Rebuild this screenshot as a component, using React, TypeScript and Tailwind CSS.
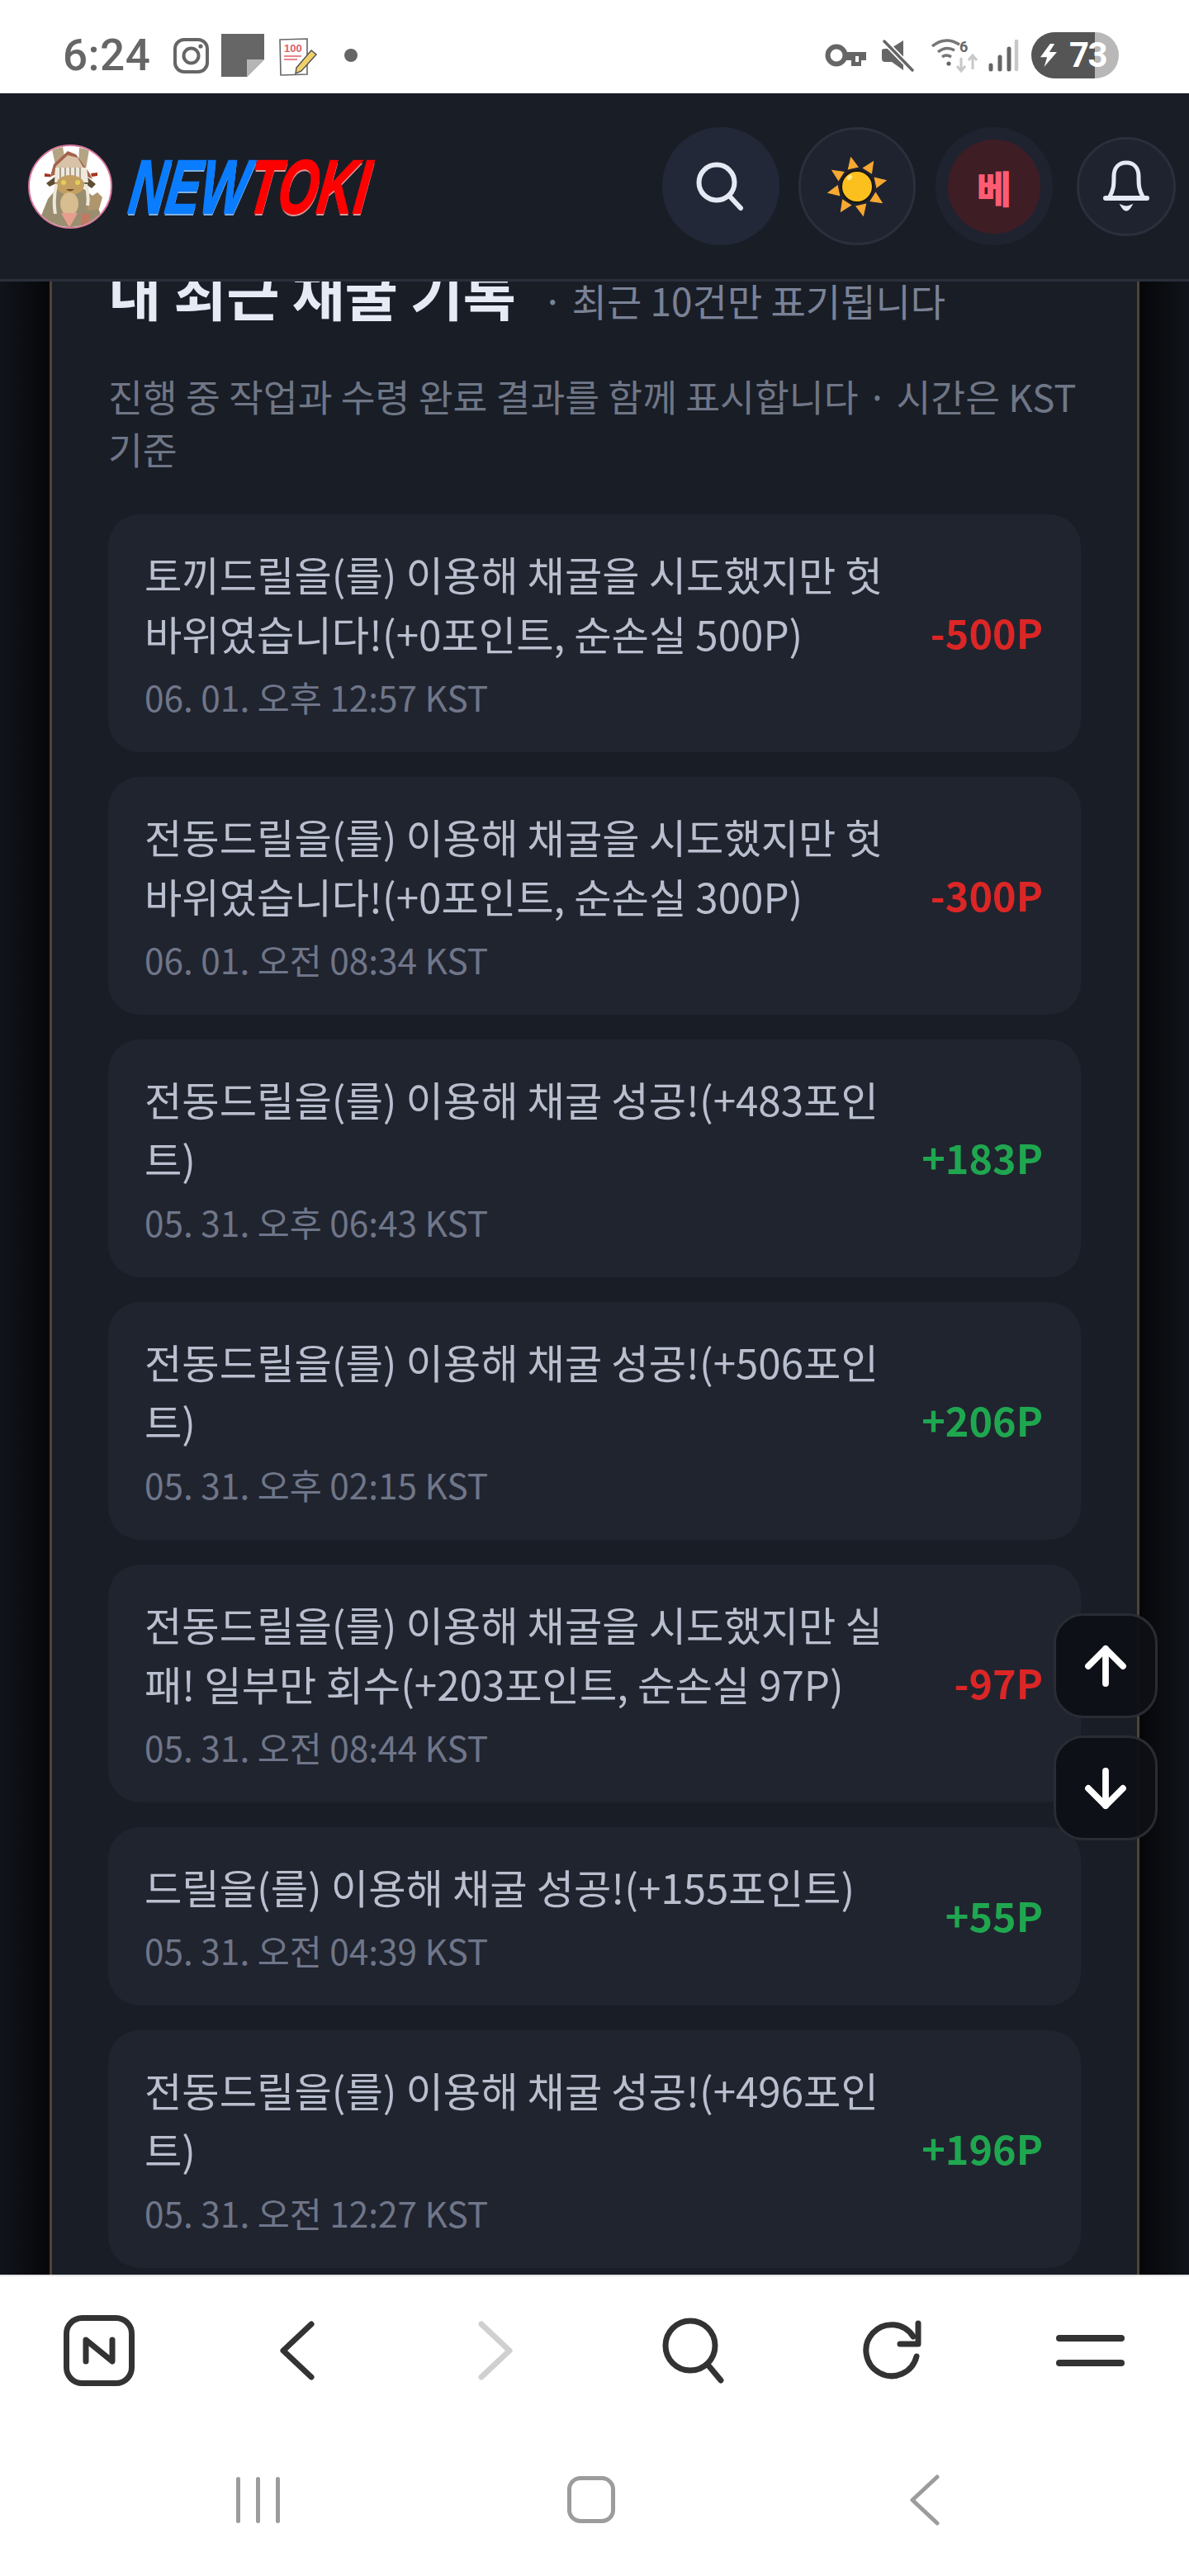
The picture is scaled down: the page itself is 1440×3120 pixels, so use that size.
import { ArrowUp, ArrowDown } from "lucide-react";

type Rec = { text: string; date: string; amount: string; plus: boolean };

const records: Rec[] = [
  { text: "토끼드릴을(를) 이용해 채굴을 시도했지만 헛\n바위였습니다!(+0포인트, 순손실 500P)", date: "06. 01. 오후 12:57 KST", amount: "-500P", plus: false },
  { text: "전동드릴을(를) 이용해 채굴을 시도했지만 헛\n바위였습니다!(+0포인트, 순손실 300P)", date: "06. 01. 오전 08:34 KST", amount: "-300P", plus: false },
  { text: "전동드릴을(를) 이용해 채굴 성공!(+483포인\n트)", date: "05. 31. 오후 06:43 KST", amount: "+183P", plus: true },
  { text: "전동드릴을(를) 이용해 채굴 성공!(+506포인\n트)", date: "05. 31. 오후 02:15 KST", amount: "+206P", plus: true },
  { text: "전동드릴을(를) 이용해 채굴을 시도했지만 실\n패! 일부만 회수(+203포인트, 순손실 97P)", date: "05. 31. 오전 08:44 KST", amount: "-97P", plus: false },
  { text: "드릴을(를) 이용해 채굴 성공!(+155포인트)", date: "05. 31. 오전 04:39 KST", amount: "+55P", plus: true },
  { text: "전동드릴을(를) 이용해 채굴 성공!(+496포인\n트)", date: "05. 31. 오전 12:27 KST", amount: "+196P", plus: true },
];

function Avatar() {
  return (
    <svg width="102" height="102" viewBox="0 0 102 102">
      <defs>
        <clipPath id="av"><circle cx="51" cy="51" r="49" /></clipPath>
      </defs>
      <circle cx="51" cy="51" r="50" fill="#fff" stroke="#d9779c" strokeWidth="2" />
      <g clipPath="url(#av)">
        <path d="M29 6l13-3 4 22-12 4zM62 4l12 2-4 24-9-4z" fill="#b5a483" />
        <path d="M12 96L24 66l10-12 34 0 12 10 10 26-16 12H24z" fill="#9a8e70" />
        <path d="M72 66l12-8 6 6-4 14-14 2z" fill="#b0966c" />
        <path d="M27 38L31 24 48 8l10 4 16 22 4 8-12-6H34l-9 4z" fill="#a4634c" />
        <path d="M34 26L48 13l12 3 12 20H32z" fill="#d8c3a8" />
        <path d="M27 36l-7-1 0 4 7 0zM76 35l8-1 0 4-7 1z" fill="#a8321e" />
        <path d="M22 47l12-9h36l12 10-5 5-9-6H34l-8 4z" fill="#5e4e34" />
        <path d="M33 28h38l2 18H32z" fill="#efe9dc" />
        <path d="M39 28v15M45 28v15M51 28v15M57 28v15M63 28v15" stroke="#a89f8d" strokeWidth="2" />
        <ellipse cx="51" cy="49" rx="17" ry="12" fill="#c39f62" />
        <circle cx="43" cy="46" r="3" fill="#e3cf58" />
        <circle cx="60" cy="46" r="3" fill="#e3cf58" />
        <path d="M46 54q5 5 10 0z" fill="#7a4a2c" />
        <path d="M34 48q-4 20-1 36M70 48q4 14 2 26" stroke="#eee8da" strokeWidth="4" fill="none" />
        <ellipse cx="50" cy="72" rx="11" ry="14" fill="#d8bd90" />
        <path d="M40 83h20l-9 16h-2z" fill="#e69f8f" />
        <path d="M64 84h12l-4 14h-8z" fill="#c07a62" />
      </g>
    </svg>
  );
}

function Sun() {
  const rays = [-12, 33, 78, 123, 168, 213, 258, 303];
  return (
    <svg width="72" height="72" viewBox="-36 -36 72 72">
      {rays.map((r) => (
        <path key={r} d="M-6 -23L0 -36L6 -23Z" fill="#f8a931" stroke="#f8a931" strokeWidth="1" transform={`rotate(${r})`} />
      ))}
      <circle r="19" fill="#fcc01e" stroke="#1a1410" strokeWidth="2" />
      <ellipse cx="-9" cy="-11" rx="3.5" ry="2.5" fill="#fde68a" transform="rotate(-40 -9 -11)" />
    </svg>
  );
}

function Bell() {
  return (
    <svg width="58" height="64" viewBox="0 0 58 64" fill="none">
      <path d="M8 46C14 36 14 30 14 20C14 9 20 3 29 3C38 3 44 9 44 20C44 30 44 36 50 46" stroke="#e5e9f4" strokeWidth="5" />
      <path d="M4 46H54" stroke="#e5e9f4" strokeWidth="6" strokeLinecap="round" />
      <path d="M23 55Q29 66 35 55Q29 58 23 55Z" fill="#e5e9f4" stroke="#e5e9f4" strokeWidth="2" />
    </svg>
  );
}

function Status() {
  return (
    <div className="h-[113px] bg-white flex items-start shrink-0 relative">
      <span className="ml-[76px] mt-[36px] text-[53px] leading-[62px] font-medium text-[#666] font-['Roboto',sans-serif] tracking-[0.5px] w-[134px]">6:24</span>
      <svg className="mt-[46px]" width="43" height="43" viewBox="0 0 43 43" fill="none">
        <rect x="2" y="2" width="39" height="39" rx="11" stroke="#666" strokeWidth="4" />
        <circle cx="21.5" cy="21.5" r="9" stroke="#666" strokeWidth="4" />
        <circle cx="33" cy="10" r="2.6" fill="#666" />
      </svg>
      <svg className="mt-[41px] ml-[15px]" width="52" height="52" viewBox="0 0 52 52">
        <path d="M0 0H52V31L31 52H0Z" fill="#666" />
        <path d="M31 31H52L31 52Z" fill="#b5b5b5" />
      </svg>
      <svg className="mt-[46px] ml-[18px]" width="46" height="46" viewBox="0 0 46 46">
        <path d="M1 2L34 1V44L2 45Z" fill="#fff" stroke="#666" strokeWidth="1.6" />
        <text x="6" y="17" fontSize="13" fontWeight="700" fill="#e0606a" fontFamily="'Liberation Sans',sans-serif">100</text>
        <path d="M6 22H27M6 26H22" stroke="#e0606a" strokeWidth="1.6" />
        <path d="M21 36L39 15L45 20L27 40L20 43Z" fill="#f1cf6b" stroke="#555" strokeWidth="1.5" />
      </svg>
      <span className="mt-[59px] ml-[33px] w-[16px] h-[16px] rounded-full bg-[#666]" />
      <div className="ml-auto mr-[85px] mt-[39px] flex items-center">
        <svg width="50" height="28" viewBox="0 0 50 28" fill="none">
          <circle cx="14" cy="14" r="10.5" stroke="#666" strokeWidth="6" />
          <path d="M24 10H50V20H44V27H32V20H24Z" fill="#666" />
          <path d="M37 15V22H41V15" fill="#fff" />
        </svg>
        <svg className="ml-[19px]" width="40" height="40" viewBox="0 0 40 40" fill="none">
          <path d="M26 2V24L10 12Z M0 14Q0 12 4 12H12L26 24V38L12 28H4Q0 28 0 24Z" fill="#666" />
          <path d="M3 3L37 38" stroke="#fff" strokeWidth="7" />
          <path d="M3 3L37 38" stroke="#666" strokeWidth="3.5" strokeLinecap="round" />
        </svg>
        <svg className="ml-[20px]" width="57" height="42" viewBox="0 0 57 42" fill="none">
          <path d="M1 10Q17 -3 34 8" stroke="#777" strokeWidth="3.5" />
          <path d="M8 17Q18 9 28 15" stroke="#777" strokeWidth="3.5" />
          <path d="M13 23Q18 19 24 23" stroke="#777" strokeWidth="3.5" />
          <circle cx="21" cy="31" r="2.6" fill="#666" />
          <text x="34" y="17" fontSize="18" fontWeight="700" fill="#666" fontFamily="'Roboto',sans-serif">6</text>
          <path d="M36 24V39M31 34L36 40L41 34" stroke="#c8c8c8" strokeWidth="3" />
          <path d="M50 38V22M45 27L50 21L55 27" stroke="#c8c8c8" strokeWidth="3" />
        </svg>
        <svg className="ml-[12px]" width="37" height="40" viewBox="0 0 37 40" fill="none">
          <path d="M3 32V37M14 22V37M25 12V37" stroke="#666" strokeWidth="5" strokeLinecap="round" />
          <path d="M34 3V37" stroke="#c8c8c8" strokeWidth="4.5" strokeLinecap="round" />
        </svg>
        <div className="ml-[15px] w-[106px] h-[56px] rounded-full bg-[linear-gradient(90deg,#555_72.5%,#b8b8b8_72.5%)] flex items-center pl-[11px]">
          <svg width="20" height="28" viewBox="0 0 22 36" preserveAspectRatio="none">
            <path d="M13 0L0 21H9L5 36L22 13H12L19 0Z" fill="#fff" />
          </svg>
          <span className="ml-[15px] text-[42px] leading-[56px] font-bold text-white font-['Roboto',sans-serif] tracking-[-1.5px]">73</span>
        </div>
      </div>
    </div>
  );
}

function Header() {
  return (
    <div className="h-[228px] shrink-0 bg-[#191d26] border-b-[3px] border-[#2a2f3b] flex items-center pl-[34px] pr-[16px]">
      <Avatar />
      <div className="ml-[22px] w-[300px] h-[70px] overflow-visible">
        <div className="origin-left scale-x-[0.67] -skew-x-12 whitespace-nowrap font-['Liberation_Sans',sans-serif] font-bold italic text-[92px] leading-[70px]">
          <span className="text-[#0a7cff] [-webkit-text-stroke:2px_#0a7cff] [text-shadow:1px_3px_0_#7fb0e0]">NEW</span>
          <span className="text-[#ff0000] [-webkit-text-stroke:2px_#ff0000] [text-shadow:1px_3px_0_#d89a9a]">TOKI</span>
        </div>
      </div>
      <div className="ml-auto flex items-center">
        <div className="w-[142px] h-[143px] rounded-full bg-[#232838] flex items-center justify-center">
          <svg width="64" height="64" viewBox="0 0 64 64" fill="none">
            <circle cx="27" cy="27" r="21.5" stroke="#e5e9f4" strokeWidth="6" />
            <path d="M42 43L56 58" stroke="#e5e9f4" strokeWidth="6" strokeLinecap="round" />
          </svg>
        </div>
        <div className="ml-[23px] w-[142px] h-[143px] rounded-full bg-[#1f2330] border-[3px] border-[#2a2f3c] flex items-center justify-center">
          <Sun />
        </div>
        <div className="ml-[24px] w-[142px] h-[143px] rounded-full bg-[#1f2330] flex items-center justify-center">
          <div className="w-[112px] h-[114px] rounded-full bg-[#3f1d24] flex items-center justify-center text-[46px] leading-none font-black text-[#ff5c74]">베</div>
        </div>
        <div className="ml-[29px] w-[120px] h-[120px] rounded-full bg-[#1f2330] border-[3px] border-[#2a2f3c] flex items-center justify-center">
          <Bell />
        </div>
      </div>
    </div>
  );
}

function Card({ r }: { r: Rec }) {
  return (
    <div className="rounded-[38px] bg-[#20242f] pl-[44px] pr-[46px] py-[36px] flex items-center justify-between">
      <div>
        <div className="text-[49.3px] leading-[72px] text-[#b9bfce] whitespace-pre-line">{r.text}</div>
        <div className="mt-[10px] text-[42.4px] leading-[62px] text-[#6f7689]">{r.date}</div>
      </div>
      <div className={r.plus ? "mb-[4px] text-[48.5px] font-bold text-[#1fa750]" : "mb-[4px] text-[48.5px] font-bold text-[#dc2626]"}>{r.amount}</div>
    </div>
  );
}

function Main() {
  return (
    <div className="flex-1 min-h-0 overflow-hidden bg-[linear-gradient(90deg,#11141b,#06070a_4%,#06070a_96%,#11141b)] px-[60px]">
      <div className="h-full flex flex-col bg-[#191d26] border-x-[3px] border-[#4f4432] pl-[68px] pr-[68px]">
        <div className="-mt-[32px] flex items-baseline h-[88px] shrink-0">
          <h2 className="text-[70px] leading-[88px] font-bold text-[#e6eaf5] tracking-[-0.5px]">내 최근 채굴 기록</h2>
          <span className="ml-[32px] text-[46px] leading-[64px] text-[#7a8296]">· 최근 10건만 표기됩니다</span>
        </div>
        <p className="mt-[50px] shrink-0 text-[45.5px] leading-[64px] text-[#6f7686] whitespace-pre-line">
          {"진행 중 작업과 수령 완료 결과를 함께 표시합니다 · 시간은 KST\n기준"}
        </p>
        <div className="mt-[48px] shrink-0 flex flex-col gap-[30px]">
          {records.map((r, i) => (
            <Card key={i} r={r} />
          ))}
        </div>
      </div>
    </div>
  );
}

function Toolbar() {
  const c = "#333";
  return (
    <div className="h-[182px] shrink-0 bg-white border-t-[2px] border-[#e4e4e6] grid grid-cols-6 items-center justify-items-center">
      <svg width="86" height="86" viewBox="0 0 86 86" fill="none">
        <rect x="3.5" y="3.5" width="79" height="79" rx="19" stroke={c} strokeWidth="7" />
        <path d="M27 56V30L59 56V30" stroke={c} strokeWidth="7" strokeLinecap="round" strokeLinejoin="round" />
      </svg>
      <svg width="42" height="72" viewBox="0 0 42 72" fill="none">
        <path d="M38 4L4 36L38 68" stroke={c} strokeWidth="7" strokeLinecap="round" strokeLinejoin="round" />
      </svg>
      <svg width="42" height="72" viewBox="0 0 42 72" fill="none">
        <path d="M4 4L38 36L4 68" stroke="#d0d0d0" strokeWidth="7" strokeLinecap="round" strokeLinejoin="round" />
      </svg>
      <svg width="76" height="80" viewBox="0 0 76 80" fill="none">
        <circle cx="34" cy="34" r="30" stroke={c} strokeWidth="7" />
        <path d="M56 58L71 76" stroke={c} strokeWidth="7" strokeLinecap="round" />
      </svg>
      <svg width="72" height="74" viewBox="0 0 72 74" fill="none">
        <path d="M66 44A31 31 0 1 1 62 20" stroke={c} strokeWidth="7" strokeLinecap="round" />
        <path d="M68 4V29H46" stroke={c} strokeWidth="7" strokeLinecap="round" strokeLinejoin="round" />
      </svg>
      <div className="flex flex-col gap-[22px]">
        <span className="block w-[83px] h-[8px] rounded-full bg-[#333]" />
        <span className="block w-[83px] h-[8px] rounded-full bg-[#333]" />
      </div>
    </div>
  );
}

function NavBar() {
  return (
    <div className="flex-none h-[183px] bg-white grid grid-cols-3 items-center justify-items-center pl-[110px] pr-[118px] pb-[2px]">
      <div className="flex gap-[19px]">
        <span className="block w-[5px] h-[56px] rounded-full bg-[#9c9c9c]" />
        <span className="block w-[5px] h-[56px] rounded-full bg-[#9c9c9c]" />
        <span className="block w-[5px] h-[56px] rounded-full bg-[#9c9c9c]" />
      </div>
      <div className="w-[58px] h-[57px] rounded-[16px] border-[5px] border-[#9c9c9c]" />
      <svg width="36" height="62" viewBox="0 0 36 62" fill="none">
        <path d="M33 3L3 31L33 59" stroke="#9c9c9c" strokeWidth="5" strokeLinecap="round" strokeLinejoin="round" />
      </svg>
    </div>
  );
}

export default function App() {
  return (
    <div className="relative w-[1440px] h-[3120px] overflow-hidden flex flex-col font-['Noto_Sans_CJK_KR','Noto_Sans',sans-serif]">
      <Status />
      <Header />
      <Main />
      <Toolbar />
      <NavBar />
      <div className="absolute left-[1276px] top-[1954px] flex flex-col gap-[21px]">
        <button className="w-[126px] h-[127px] rounded-[36px] bg-[#0e1016]/95 border-[3px] border-[#2a2c33] flex items-center justify-center text-white">
          <ArrowUp size={72} strokeWidth={2.6} />
        </button>
        <button className="w-[126px] h-[127px] rounded-[36px] bg-[#0e1016]/95 border-[3px] border-[#2a2c33] flex items-center justify-center text-white">
          <ArrowDown size={72} strokeWidth={2.6} />
        </button>
      </div>
    </div>
  );
}
